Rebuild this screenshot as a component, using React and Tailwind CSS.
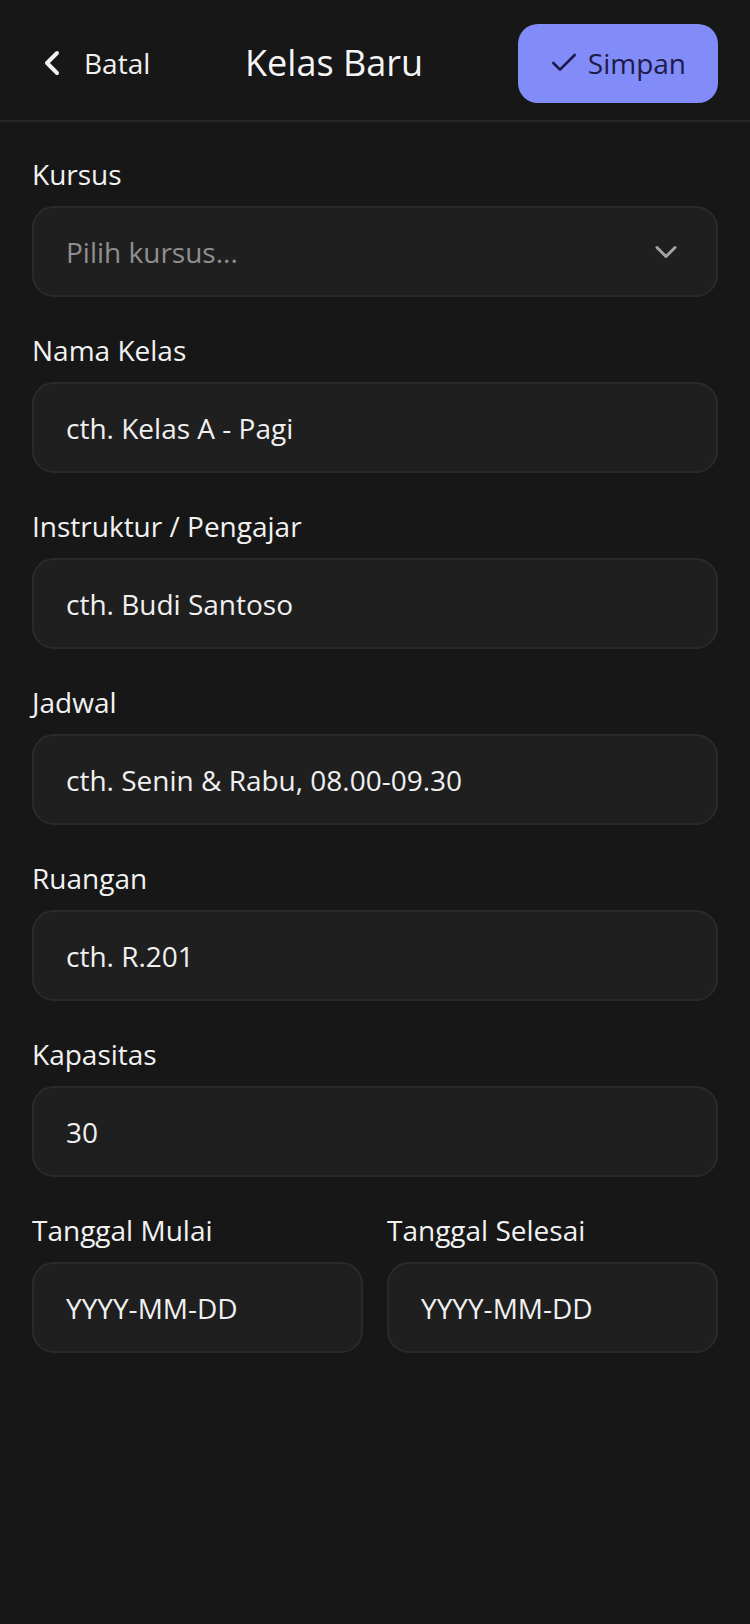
import React from "react";
import { ChevronLeft, Check, ChevronDown } from "lucide-react";

function Field({ label, children }) {
  return (
    <div className="flex flex-col">
      <div className="text-[28px] leading-[36px] text-[#f2f2f2]">{label}</div>
      <div className="mt-[14px]">{children}</div>
    </div>
  );
}

function Box({ text, muted, right }) {
  return (
    <div className="flex h-[91px] items-center justify-between rounded-[22px] border-2 border-[#2a2a2a] bg-[#1f1f1f] px-8">
      <span className={"text-[28px] leading-[36px] " + (muted ? "text-[#8f8f8f]" : "text-[#f0f0f0]")}>{text}</span>
      {right}
    </div>
  );
}

export default function App() {
  return (
    <div
      className="min-h-[1624px] w-full bg-[#171717] text-white"
      style={{ fontFamily: '"Open Sans", "Noto Sans", sans-serif' }}
    >
      <header className="flex h-[122px] items-center justify-between border-b-2 border-[#262626] pl-8 pr-8 pt-[6px]">
        <div className="flex items-center gap-3">
          <ChevronLeft size={40} strokeWidth={2.4} className="text-[#f2f2f2]" />
          <span className="text-[28px] leading-[36px] text-[#f2f2f2]">Batal</span>
        </div>
        <div className="text-[36px] leading-[44px] text-[#f5f5f5]">Kelas Baru</div>
        <button className="flex h-[79px] items-center gap-2 rounded-[20px] bg-[#818cf8] pl-[30px] pr-8 text-[#1e1b4b]">
          <Check size={32} strokeWidth={2} />
          <span className="text-[28px] leading-[36px]">Simpan</span>
        </button>
      </header>

      <main className="flex flex-col gap-[35px] px-8 pt-[34px]">
        <Field label="Kursus">
          <Box
            text="Pilih kursus..."
            muted
            right={<ChevronDown size={36} strokeWidth={2} className="text-[#a3a3a3]" />}
          />
        </Field>
        <Field label="Nama Kelas">
          <Box text="cth. Kelas A - Pagi" />
        </Field>
        <Field label="Instruktur / Pengajar">
          <Box text="cth. Budi Santoso" />
        </Field>
        <Field label="Jadwal">
          <Box text="cth. Senin & Rabu, 08.00-09.30" />
        </Field>
        <Field label="Ruangan">
          <Box text="cth. R.201" />
        </Field>
        <Field label="Kapasitas">
          <Box text="30" />
        </Field>
        <div className="grid grid-cols-2 gap-6">
          <Field label="Tanggal Mulai">
            <Box text="YYYY-MM-DD" />
          </Field>
          <Field label="Tanggal Selesai">
            <Box text="YYYY-MM-DD" />
          </Field>
        </div>
      </main>
    </div>
  );
}
